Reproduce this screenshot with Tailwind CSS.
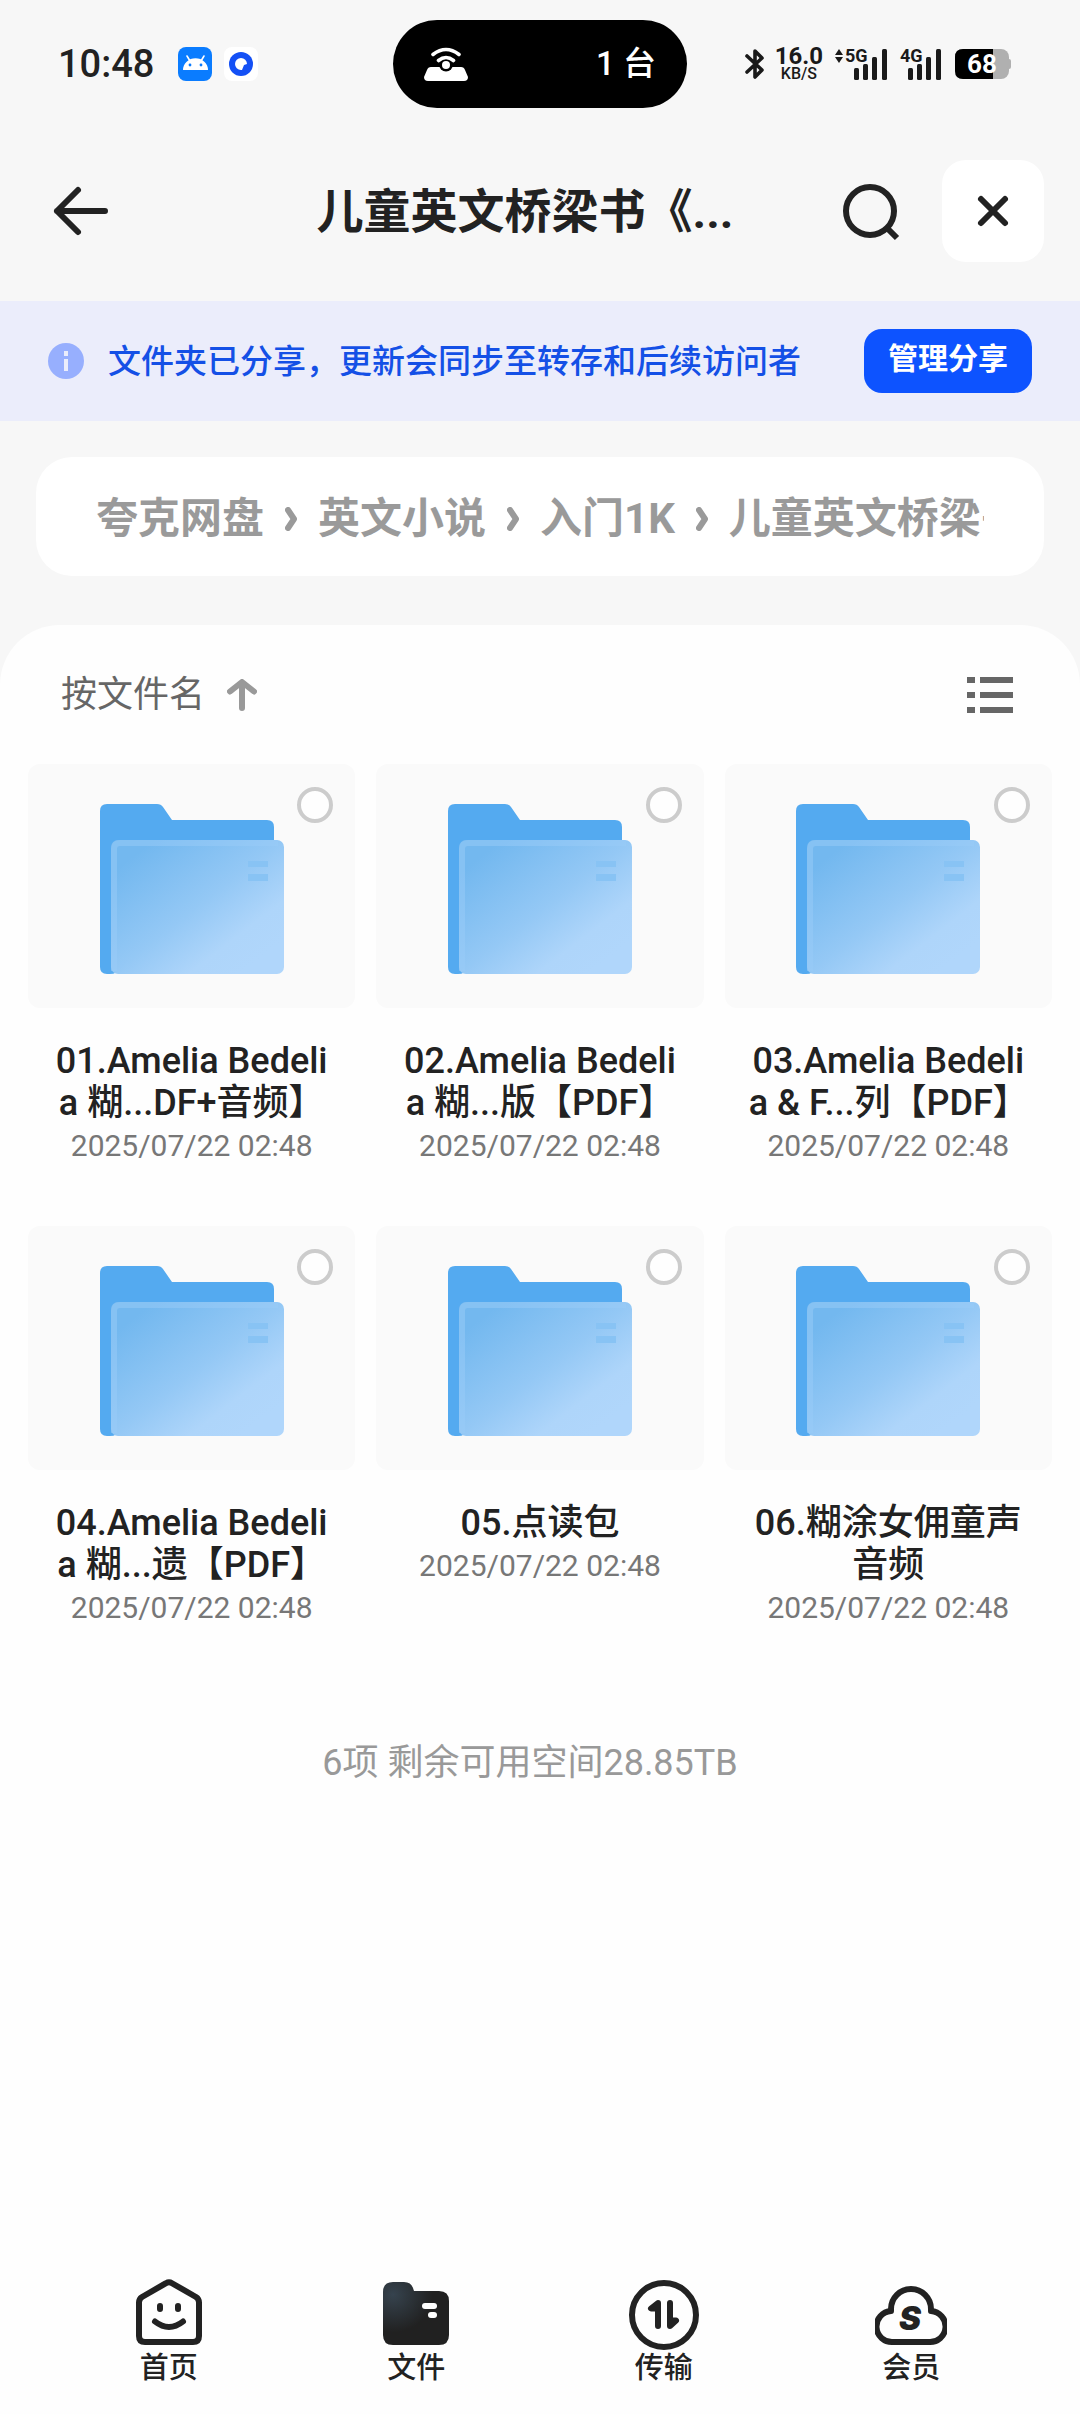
<!DOCTYPE html>
<html lang="zh-CN">
<head>
  <meta charset="UTF-8" />
  <meta name="viewport" content="width=device-width, initial-scale=1.0" />
  <title>夸克网盘</title>
  <script src="https://cdn.jsdelivr.net/npm/@tailwindcss/browser@4"></script>
</head>
<body class="min-h-screen flex flex-col bg-[#f7f7f7] text-[#222] font-['Roboto','Noto_Sans_CJK_SC',sans-serif]">

  <!-- Status bar -->
  <div class="grid grid-cols-[1fr_294px_1fr] items-center h-32">
    <div class="flex items-center pl-[58px] gap-3">
      <span class="text-[38px] leading-10 font-medium mr-3">10:48</span>
      <svg class="w-[34px] h-[34px]" viewBox="0 0 34 34">
        <rect width="34" height="34" rx="8" fill="#0a7cff" />
        <path d="M5 23a12.3 11.5 0 0 1 25 0Z" fill="#fff" />
        <path d="M9 9l3 5M26 9l-3 5" stroke="#fff" stroke-width="1.6" stroke-linecap="round" />
        <circle cx="12" cy="18" r="1.4" fill="#0a7cff" /><circle cx="23" cy="18" r="1.4" fill="#0a7cff" />
      </svg>
      <svg class="w-[34px] h-[34px]" viewBox="0 0 34 34">
        <rect width="34" height="34" rx="8" fill="#fff" />
        <circle cx="17" cy="17" r="12" fill="#1450f5" />
        <path d="M17 11a6 6 0 0 1 6 6l-3 1-2 5h-1a6 6 0 0 1 0-12Z" fill="#fff" />
      </svg>
    </div>
    <div class="flex items-center justify-between h-[88px] rounded-full bg-black text-white pl-[31px] pr-[31px]">
      <svg class="w-11 h-[34px]" viewBox="0 0 44 34">
        <path d="M7 20h30q3 0 4 3l3 7q0 4-4 4H4q-4 0-4-4l3-7q1-3 4-3Z" fill="#fff" />
        <circle cx="22" cy="17.500" r="7" fill="#000" />
        <circle cx="22" cy="18" r="4" fill="#fff" />
        <path d="M14.500 13.500q7.500-6 15 0M9 7.500q13-10 26 0" fill="none" stroke="#fff" stroke-width="3.600" stroke-linecap="round" />
      </svg>
      <span class="text-[33px] leading-10 font-medium">1 台</span>
    </div>
    <div class="flex items-center justify-end pr-[69px] text-[#1a1a1a]">
      <svg class="w-5 h-8 mr-[10px]" viewBox="0 0 20 32">
        <path d="M2 8l15 14-7 7V3l7 7L2 24" fill="none" stroke="currentColor" stroke-width="3.600" stroke-linejoin="round" stroke-linecap="round" />
      </svg>
      <div class="flex flex-col items-center font-bold mr-3">
        <span class="text-2xl leading-5">16.0</span>
        <span class="text-base leading-4 font-medium">KB/S</span>
      </div>
      <svg class="w-[53px] h-8 mr-3 overflow-visible" viewBox="0 0 53 32" fill="currentColor">
        <path d="M0 7l4-6 4 6ZM0 9h8l-4 6Z" />
        <text x="10" y="14" font-size="18" font-weight="700">5G</text>
        <rect x="19" y="20" width="5" height="12" rx="1.500" /><rect x="28" y="16" width="5" height="16" rx="1.500" />
        <rect x="37" y="9" width="5" height="23" rx="1.500" /><rect x="47" y="1" width="5" height="31" rx="1.500" />
      </svg>
      <svg class="w-[41px] h-8 mr-[14px] overflow-visible" viewBox="0 0 41 32" fill="currentColor">
        <text x="0" y="14" font-size="18" font-weight="700">4G</text>
        <rect x="8" y="20" width="5" height="12" rx="1.500" /><rect x="17" y="16" width="5" height="16" rx="1.500" />
        <rect x="26" y="9" width="5" height="23" rx="1.500" /><rect x="36" y="1" width="5" height="31" rx="1.500" />
      </svg>
      <svg class="w-14 h-[30px]" viewBox="0 0 56 30">
        <rect width="54" height="30" rx="8" fill="#b0b0b0" /><rect x="52" y="10" width="4" height="10" rx="2" fill="#b0b0b0" />
        <path d="M8 0H38V30H8Q0 30 0 22V8Q0 0 8 0Z" fill="#000" />
        <text x="27" y="24" text-anchor="middle" font-size="26" font-weight="700" fill="#fff">68</text>
      </svg>
    </div>
  </div>

  <!-- Header -->
  <header class="flex items-center pt-8 pb-[39px] pl-12 pr-9">
    <button aria-label="返回">
      <svg class="w-[66px] h-[66px]" viewBox="0 0 66 66" fill="none" stroke="currentColor" stroke-width="6" stroke-linecap="round" stroke-linejoin="round">
        <path d="M57 33H9M30 12 9 33l21 21" />
      </svg>
    </button>
    <h1 class="flex-1 pl-24 pt-[2px] text-center text-[47px] leading-[60px] font-bold whitespace-nowrap">儿童英文桥梁书《...</h1>
    <button aria-label="搜索" class="mr-9">
      <svg class="w-[66px] h-[66px]" viewBox="0 0 66 66" fill="none" stroke="currentColor" stroke-width="6">
        <circle cx="30" cy="33" r="24" /><path d="M46 49l11 11" />
      </svg>
    </button>
    <button aria-label="关闭" class="bg-white rounded-3xl">
      <svg class="w-[102px] h-[102px]" viewBox="0 0 102 102" fill="none" stroke="currentColor" stroke-width="6" stroke-linecap="round">
        <path d="M39 39l24 24M63 39 39 63" />
      </svg>
    </button>
  </header>

  <!-- Share notice -->
  <div class="flex items-center h-[120px] pl-12 pr-12 bg-[#ebedfb]">
    <svg class="w-9 h-9 mr-6" viewBox="0 0 36 36">
      <circle cx="18" cy="18" r="18" fill="#97affe" />
      <path d="M16 8h4v5h-4ZM16 16h4v12h-4Z" fill="#ebedfb" />
    </svg>
    <p class="flex-1 pt-[2px] text-[33px] leading-10 font-medium text-[#1450e6]">文件夹已分享，更新会同步至转存和后续访问者</p>
    <button class="h-16 px-6 rounded-[18px] bg-[#0d53ff] text-white text-[30px] leading-10 font-bold pb-1">管理分享</button>
  </div>

  <!-- Breadcrumb -->
  <nav class="mx-9 mt-9 h-[119px] px-[60px] pt-1 rounded-[36px] bg-white flex items-center">
    <div class="flex items-center gap-[21px] overflow-hidden whitespace-nowrap text-[42px] leading-[60px] font-bold text-[#9a9a9a]">
      <a href="#">夸克网盘</a>
      <svg class="w-3 h-6 shrink-0" viewBox="0 0 12 24" fill="none" stroke="currentColor" stroke-width="6" stroke-linecap="round" stroke-linejoin="round"><path d="M3 3l6 9-6 9" /></svg>
      <a href="#">英文小说</a>
      <svg class="w-3 h-6 shrink-0" viewBox="0 0 12 24" fill="none" stroke="currentColor" stroke-width="6" stroke-linecap="round" stroke-linejoin="round"><path d="M3 3l6 9-6 9" /></svg>
      <a href="#">入门1K</a>
      <svg class="w-3 h-6 shrink-0" viewBox="0 0 12 24" fill="none" stroke="currentColor" stroke-width="6" stroke-linecap="round" stroke-linejoin="round"><path d="M3 3l6 9-6 9" /></svg>
      <a href="#">儿童英文桥梁书</a>
    </div>
  </nav>

  <!-- File list -->
  <main class="flex-1 flex flex-col mt-[49px] rounded-t-[60px] bg-[#fefefe]">
    <div class="flex items-center justify-between h-[139px] pl-[61px] pr-[67px]">
      <button class="flex items-center gap-[22px] text-[36px] leading-10 text-[#666]">
        按文件名
        <svg class="w-[30px] h-8" viewBox="0 0 30 32" fill="none" stroke="#999" stroke-width="6" stroke-linecap="round" stroke-linejoin="round">
          <path d="M15 29V4M3 12.500 15 3l12 9.500" />
        </svg>
      </button>
      <button aria-label="列表视图">
        <svg class="w-[46px] h-9" viewBox="0 0 46 36" fill="#666">
          <path d="M0 0h8v6H0ZM13 0h33v6H13ZM0 15h8v6H0ZM13 15h33v6H13ZM0 30h8v6H0ZM13 30h33v6H13Z" />
        </svg>
      </button>
    </div>

    <ul id="fileGrid" class="grid grid-cols-3 gap-x-[21px] gap-y-[60px] px-7">
      <!-- Files will be inserted here -->
    </ul>

    <p class="mt-[110px] pr-5 text-center text-[36px] leading-[50px] text-[#999]">6项 剩余可用空间28.85TB</p>
  </main>

  <!-- Bottom tabs -->
  <nav class="grid grid-cols-4 px-[45px] pt-6 pb-[30px] bg-[#fefefe] text-[29px] leading-8 font-medium text-center">
    <a href="#" class="flex flex-col items-center gap-[2px]">
      <svg class="w-[72px] h-[72px]" viewBox="-3 -1 72 72" fill="none" stroke="currentColor" stroke-width="6" stroke-linecap="round" stroke-linejoin="round">
        <path d="M30 4.200q3-1.800 6 0L60 18q3 2 3 5.500V57q0 6-6 6H9q-6 0-6-6V23.500Q3 20 6 18Z" />
        <path d="M24 27v3M42 27v3M19 42.500q14 11 28 0" />
      </svg>
      首页
    </a>
    <a href="#" class="flex flex-col items-center gap-[2px]">
      <svg class="w-[72px] h-[72px]" viewBox="-3 -4 72 72">
        <defs>
          <radialGradient id="tabShade" cx="0.150" cy="0.200" r="0.600">
            <stop offset="0" stop-color="#36434e" /><stop offset="1" stop-color="#212121" />
          </radialGradient>
        </defs>
        <path d="M10 0h11q7 0 9 6l1 3h25q10 0 10 10v34q0 10-10 10H10Q0 63 0 53V10Q0 0 10 0Z" fill="url(#tabShade)" />
        <rect x="39" y="21" width="15" height="6" rx="3" fill="#fff" /><rect x="45" y="30" width="9" height="6" rx="3" fill="#fff" />
      </svg>
      文件
    </a>
    <a href="#" class="flex flex-col items-center gap-[2px]">
      <svg class="w-[72px] h-[72px]" viewBox="-1 -2 72 72" fill="none" stroke="currentColor" stroke-width="6" stroke-linecap="round" stroke-linejoin="round">
        <circle cx="35" cy="35" r="32" />
        <path d="M29 46V23l-7 5.500h7M41 23v23l6-5.500h-6" fill="currentColor" />
      </svg>
      传输
    </a>
    <a href="#" class="flex flex-col items-center gap-[2px]">
      <svg class="w-[72px] h-[72px]" viewBox="0 -8 72 72">
        <path d="M18 56A15.500 15.500 0 0 1 16 25V23A20 20 0 0 1 56 23V25A15.500 15.500 0 0 1 54 56Z" fill="none" stroke="currentColor" stroke-width="6" stroke-linejoin="round" />
        <text x="35" y="44" text-anchor="middle" font-size="33" font-weight="900" font-style="italic" class="font-['Inter']" fill="currentColor">S</text>
      </svg>
      会员
    </a>
  </nav>

  <!-- Shared folder gradient -->
  <svg class="absolute w-0 h-0">
    <defs>
      <linearGradient id="folderFront" x1="0.100" y1="0.150" x2="0.850" y2="0.900">
        <stop offset="0" stop-color="#73b8ef" /><stop offset="0.500" stop-color="#94c8f5" /><stop offset="0.800" stop-color="#aed5fa" /><stop offset="1" stop-color="#b0d6fb" />
      </linearGradient>
    </defs>
  </svg>

  <script>
    const files = [
      { name: '01.Amelia Bedelia 糊...DF+音频】', date: '2025/07/22 02:48' },
      { name: '02.Amelia Bedelia 糊...版【PDF】', date: '2025/07/22 02:48' },
      { name: '03.Amelia Bedelia & F...列【PDF】', date: '2025/07/22 02:48' },
      { name: '04.Amelia Bedelia 糊...遗【PDF】', date: '2025/07/22 02:48' },
      { name: '05.点读包', date: '2025/07/22 02:48' },
      { name: '06.糊涂女佣童声音频', date: '2025/07/22 02:48' },
    ];

    const fileGrid = document.getElementById('fileGrid');

    files.forEach((file, i) => {
      const item = document.createElement('li');
      item.innerHTML = `
        <div class="relative flex justify-center h-[244px] pt-10 rounded-xl bg-[#fafafa]">
          <svg class="w-[184px] h-[170px]" viewBox="0 0 184 170">
            <path d="M7 0H57q4 0 6 3l9 13H167q7 0 7 7V80H18V164q0 6-8 6H7q-7 0-7-7V7Q0 0 7 0Z" fill="#54aaf0" />
            <rect x="11" y="36" width="173" height="134" rx="7" fill="url(#folderFront)" />
            <path d="M14 167V45q0-6 6-6H178" fill="none" stroke="#9accf8" stroke-opacity="0.500" stroke-width="6" />
            <path d="M148 57h20v6h-20ZM148 70h20v7h-20Z" fill="#88c3f4" />
          </svg>
          <input type="checkbox" id="file-${i}" class="absolute top-[23px] right-[22px] w-9 h-9 appearance-none rounded-full border-4 border-[#ccc] bg-[#fefefe] checked:bg-[#0d53ff]" />
        </div>
        <label for="file-${i}" class="block mt-8 px-6 text-center text-[36px] leading-[42px] font-medium break-all"></label>
        <p class="mt-[2px] text-center text-[30px] leading-10 text-[#777]">${file.date}</p>`;
      item.querySelector('label').textContent = file.name;
      fileGrid.appendChild(item);
    });
  </script>
</body>
</html>
